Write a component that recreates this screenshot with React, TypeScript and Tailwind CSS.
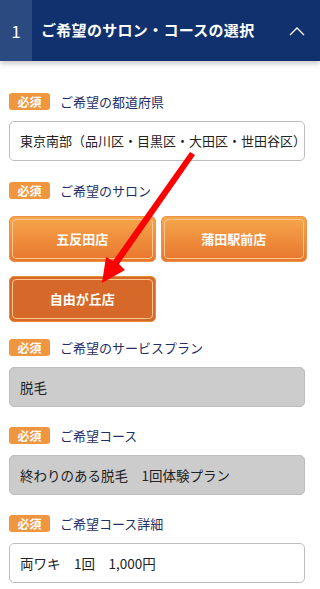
import React from 'react';

const font = { fontFamily: '"Noto Sans CJK JP", "Noto Sans", sans-serif' };

const Badge = () => (
  <span className="flex h-[17px] w-[41px] items-center justify-center rounded-[3px] bg-[#f0963f] text-[12px] font-bold leading-none text-white">
    必須
  </span>
);

const FieldLabel = ({ text }: { text: string }) => (
  <div className="flex items-center gap-[10px]">
    <Badge />
    <span className="text-[13px] leading-none text-[#1f2f66]">{text}</span>
  </div>
);

const TextBox = ({ value, disabled }: { value: string; disabled?: boolean }) => (
  <div
    className={
      disabled
        ? 'mr-[6px] flex h-[40px] items-center overflow-hidden whitespace-nowrap rounded-[5px] border border-[#bdbdbd] bg-[#cccccc] pl-[10px] text-[13.5px] text-[#222]'
        : 'mr-[6px] flex h-[40px] items-center overflow-hidden whitespace-nowrap rounded-[5px] border border-[#bdbdbd] bg-white pl-[10px] text-[13.5px] text-[#222]'
    }
  >
    {value}
  </div>
);

const SalonButton = ({ name, selected }: { name: string; selected?: boolean }) => (
  <button
    className={
      selected
        ? 'h-[46px] rounded-[5px] border border-[#e68a3c] bg-[#d6692a] p-[2px]'
        : 'h-[46px] rounded-[5px] border border-[#eb9446] bg-gradient-to-b from-[#f6a64c] to-[#e8752d] p-[2px]'
    }
  >
    <span className="flex h-full w-full items-center justify-center rounded-[4px] border border-[#fbc98e] text-[13px] font-bold text-white">
      {name}
    </span>
  </button>
);

export default function App() {
  return (
    <div className="relative min-h-[589px] w-[320px] bg-white" style={font}>
      <div className="flex h-[61px] items-stretch bg-[#10316d] shadow-[0_3px_5px_rgba(0,0,0,0.2)]">
        <div className="flex w-[32px] items-center justify-center bg-[#2b4a80] text-[17px] text-white">1</div>
        <div className="flex flex-1 items-center pl-[9px] text-[15px] font-bold tracking-[0.3px] text-white">
          ご希望のサロン・コースの選択
        </div>
        <div className="flex w-[40px] items-center justify-center pr-[6px]">
          <svg width="16" height="10" viewBox="0 0 16 10" fill="none" stroke="white" strokeWidth="1.3">
            <path d="M1 9 L8 2 L15 9" />
          </svg>
        </div>
      </div>

      <div className="flex flex-col pl-[9px] pr-[9px] pt-[32px]">
        <FieldLabel text="ご希望の都道府県" />
        <div className="mt-[11px] text-[13px]">
          <div className="mr-[6px] flex h-[40px] items-center whitespace-nowrap rounded-[5px] border border-[#bdbdbd] bg-white pl-[10px] text-[13px] text-[#222]">
            東京南部（品川区・目黒区・大田区・世田谷区）
          </div>
        </div>

        <div className="mt-[21px]">
          <FieldLabel text="ご希望のサロン" />
        </div>
        <div className="mt-[17px] grid grid-cols-2 gap-x-[5px] gap-y-[14px] pr-[4px]">
          <SalonButton name="五反田店" />
          <SalonButton name="蒲田駅前店" />
          <SalonButton name="自由が丘店" selected />
        </div>

        <div className="mt-[17px]">
          <FieldLabel text="ご希望のサービスプラン" />
        </div>
        <div className="mt-[11px]">
          <TextBox value="脱毛" disabled />
        </div>

        <div className="mt-[20px]">
          <FieldLabel text="ご希望コース" />
        </div>
        <div className="mt-[11px]">
          <TextBox value="終わりのある脱毛　1回体験プラン" disabled />
        </div>

        <div className="mt-[20px]">
          <FieldLabel text="ご希望コース詳細" />
        </div>
        <div className="mt-[11px]">
          <TextBox value="両ワキ　1回　1,000円" />
        </div>
      </div>

      <svg className="pointer-events-none absolute left-0 top-0" width="320" height="589" viewBox="0 0 320 589">
        <path d="M190 152 L195 155 L119 264 L125 270 L102 283 L106 257 L113 261 Z" fill="#ff0000" />
      </svg>
    </div>
  );
}
